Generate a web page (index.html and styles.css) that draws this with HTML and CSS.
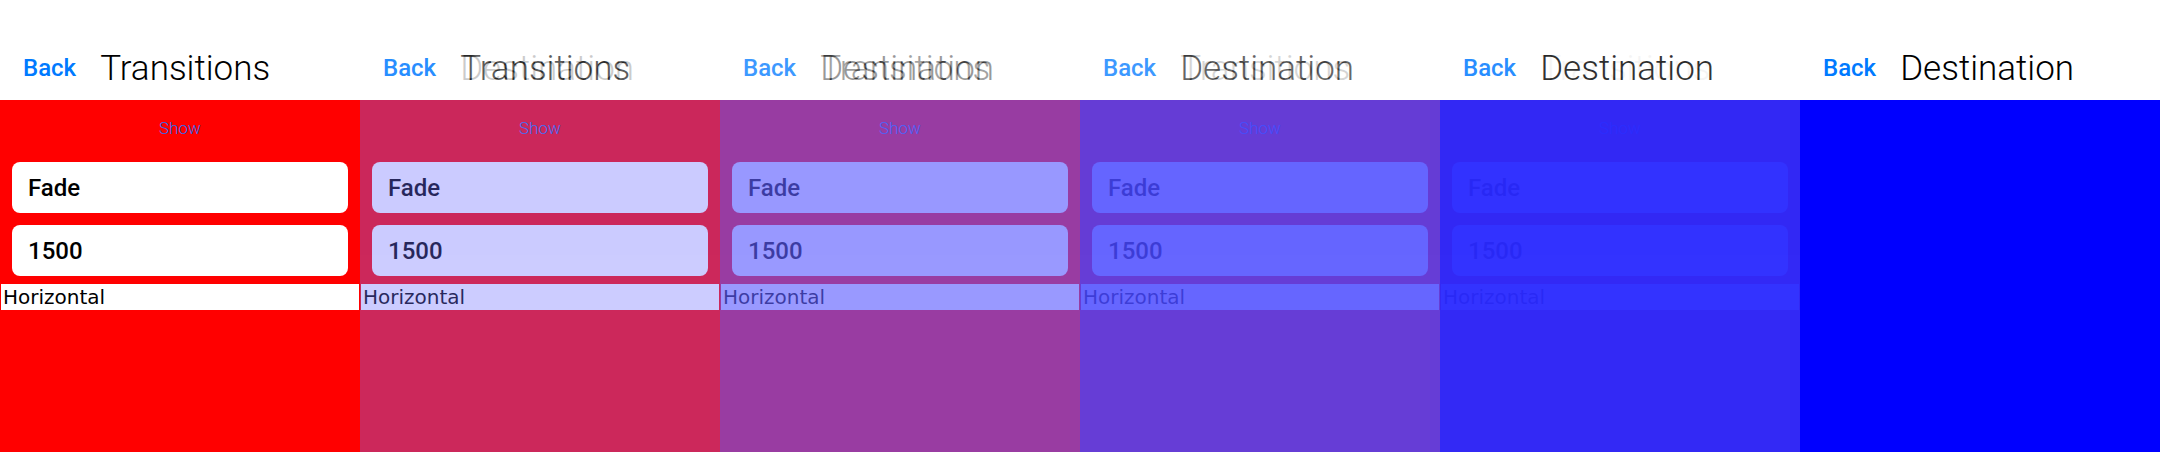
FILE: index.html
```html
<!DOCTYPE html>
<html lang="en">
<head>
    <meta charset="UTF-8">
    <meta name="viewport" content="width=device-width, initial-scale=1.0">
    <title>Transitions</title>
    <link rel="stylesheet" href="styles.css">
</head>
<body>
    <div class="strip">
        <!-- each frame is one step of the fade, --t is the progress -->
        <div class="frame" style="--t: 0">
            <section class="page page-from">
                <header class="nav"><span class="nav-back">Back</span><span class="nav-title">Transitions</span></header>
                <div class="content content-red">
                    <div class="show">Show</div>
                    <div class="field">Fade</div>
                    <div class="field">1500</div>
                    <div class="picker">Horizontal</div>
                </div>
            </section>
            <section class="page page-to">
                <header class="nav"><span class="nav-back">Back</span><span class="nav-title">Destination</span></header>
                <div class="content content-blue"></div>
            </section>
        </div>

        <div class="frame" style="--t: 0.2">
            <section class="page page-from">
                <header class="nav"><span class="nav-back">Back</span><span class="nav-title">Transitions</span></header>
                <div class="content content-red">
                    <div class="show">Show</div>
                    <div class="field">Fade</div>
                    <div class="field">1500</div>
                    <div class="picker">Horizontal</div>
                </div>
            </section>
            <section class="page page-to">
                <header class="nav"><span class="nav-back">Back</span><span class="nav-title">Destination</span></header>
                <div class="content content-blue"></div>
            </section>
        </div>

        <div class="frame" style="--t: 0.4">
            <section class="page page-from">
                <header class="nav"><span class="nav-back">Back</span><span class="nav-title">Transitions</span></header>
                <div class="content content-red">
                    <div class="show">Show</div>
                    <div class="field">Fade</div>
                    <div class="field">1500</div>
                    <div class="picker">Horizontal</div>
                </div>
            </section>
            <section class="page page-to">
                <header class="nav"><span class="nav-back">Back</span><span class="nav-title">Destination</span></header>
                <div class="content content-blue"></div>
            </section>
        </div>

        <div class="frame" style="--t: 0.6">
            <section class="page page-from">
                <header class="nav"><span class="nav-back">Back</span><span class="nav-title">Transitions</span></header>
                <div class="content content-red">
                    <div class="show">Show</div>
                    <div class="field">Fade</div>
                    <div class="field">1500</div>
                    <div class="picker">Horizontal</div>
                </div>
            </section>
            <section class="page page-to">
                <header class="nav"><span class="nav-back">Back</span><span class="nav-title">Destination</span></header>
                <div class="content content-blue"></div>
            </section>
        </div>

        <div class="frame" style="--t: 0.8">
            <section class="page page-from">
                <header class="nav"><span class="nav-back">Back</span><span class="nav-title">Transitions</span></header>
                <div class="content content-red">
                    <div class="show">Show</div>
                    <div class="field">Fade</div>
                    <div class="field">1500</div>
                    <div class="picker">Horizontal</div>
                </div>
            </section>
            <section class="page page-to">
                <header class="nav"><span class="nav-back">Back</span><span class="nav-title">Destination</span></header>
                <div class="content content-blue"></div>
            </section>
        </div>

        <div class="frame" style="--t: 1">
            <section class="page page-from">
                <header class="nav"><span class="nav-back">Back</span><span class="nav-title">Transitions</span></header>
                <div class="content content-red">
                    <div class="show">Show</div>
                    <div class="field">Fade</div>
                    <div class="field">1500</div>
                    <div class="picker">Horizontal</div>
                </div>
            </section>
            <section class="page page-to">
                <header class="nav"><span class="nav-back">Back</span><span class="nav-title">Destination</span></header>
                <div class="content content-blue"></div>
            </section>
        </div>
    </div>
</body>
</html>
```

FILE: styles.css
```css
* {
    box-sizing: border-box;
}

body {
    margin: 0;
    padding: 0;
    background: #ffffff;
    font-family: Roboto, "Liberation Sans", Arial, sans-serif;
    overflow: hidden;
}

.strip {
    display: flex;
    width: 2160px;
    height: 452px;
}

.frame {
    position: relative;
    width: 360px;
    height: 452px;
    flex: none;
    background: #ffffff;
    overflow: hidden;
}

.page {
    position: absolute;
    top: 0;
    left: 0;
    right: 0;
    bottom: 0;
    display: flex;
    flex-direction: column;
}

.page-from {
    opacity: calc(1 - var(--t));
}

.page-to {
    opacity: var(--t);
}

.nav {
    height: 100px;
    padding-top: 36px;
    padding-left: 23px;
    display: flex;
    align-items: center;
    gap: 24px;
    background: #ffffff;
}

.nav-back {
    font-size: 24px;
    font-weight: 500;
    color: #007aff;
}

.nav-title {
    font-size: 35px;
    font-weight: 300;
    color: #000000;
}

.content {
    flex: 1;
}

.content-red {
    background: #ff0000;
}

.content-blue {
    background: #0000ff;
}

.show {
    margin-top: 18px;
    height: 20px;
    line-height: 20px;
    text-align: center;
    font-size: 17px;
    font-weight: 300;
    color: #2b6cf2;
}

.field {
    height: 51px;
    margin: 24px 12px 0;
    padding-left: 16px;
    display: flex;
    align-items: center;
    background: #ffffff;
    border-radius: 8px;
    font-size: 24px;
    font-weight: 500;
    color: #000000;
}

.field + .field {
    margin-top: 12px;
}

.picker {
    height: 26px;
    margin: 8px 1px 0;
    padding-left: 2px;
    line-height: 26px;
    background: #ffffff;
    font-family: "DejaVu Sans", sans-serif;
    font-size: 20px;
    color: #000000;
}
```
